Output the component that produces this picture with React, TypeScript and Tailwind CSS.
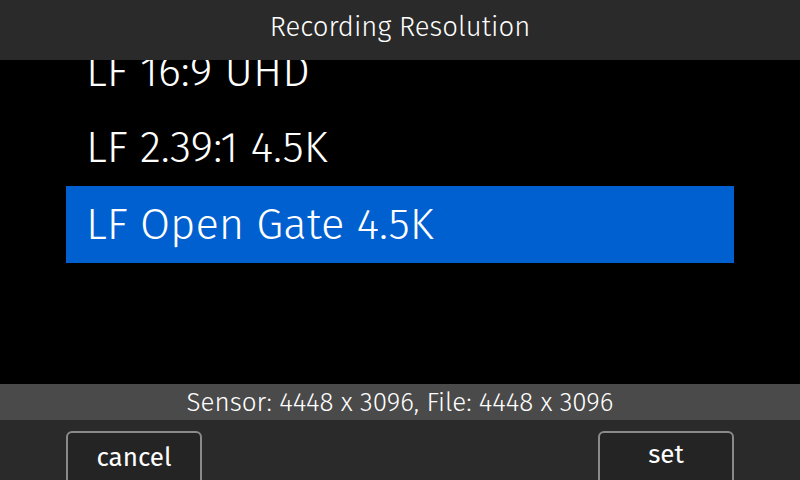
const items = ['LF 16:9 UHD', 'LF 2.39:1 4.5K', 'LF Open Gate 4.5K'];
const selected = 2;

const font = { fontFamily: '"Fira Sans", Roboto, "Open Sans", sans-serif' };

export default function App() {
  return (
    <div className="w-[800px] h-[480px] bg-black flex flex-col overflow-hidden text-white" style={font}>
      <div className="h-[60px] shrink-0 bg-[#2a2a2a] flex items-center justify-center text-[27.5px] font-light pb-[6px] relative z-10">
        Recording Resolution
      </div>
      <div className="h-[324px] shrink-0 overflow-hidden">
        <div className="-mt-[26px] flex flex-col">
          {items.map((label, i) => (
            <div
              key={label}
              className={
                i === selected
                  ? 'mx-[66px] h-[77px] flex items-center pl-[20px] text-[43.6px] font-light bg-[#0060d0]'
                  : 'mx-[66px] h-[76px] flex items-center pl-[20px] text-[43.6px] font-light'
              }
            >
              {label}
            </div>
          ))}
        </div>
      </div>
      <div className="h-[36px] shrink-0 bg-[#4a4a4a] flex items-center justify-center text-[26px] font-light">
        Sensor: 4448 x 3096, File: 4448 x 3096
      </div>
      <div className="flex-1 bg-[#2a2a2a] flex justify-between px-[66px] pt-[11px]">
        <button className="w-[136px] h-[60px] border-2 border-[#8a8a8a] rounded-[6px] bg-[#242424] text-[26px] text-white pb-[8px]">
          cancel
        </button>
        <button className="w-[136px] h-[60px] border-2 border-[#8a8a8a] rounded-[6px] bg-[#242424] text-[26px] text-white pb-[14px]">
          set
        </button>
      </div>
    </div>
  );
}
